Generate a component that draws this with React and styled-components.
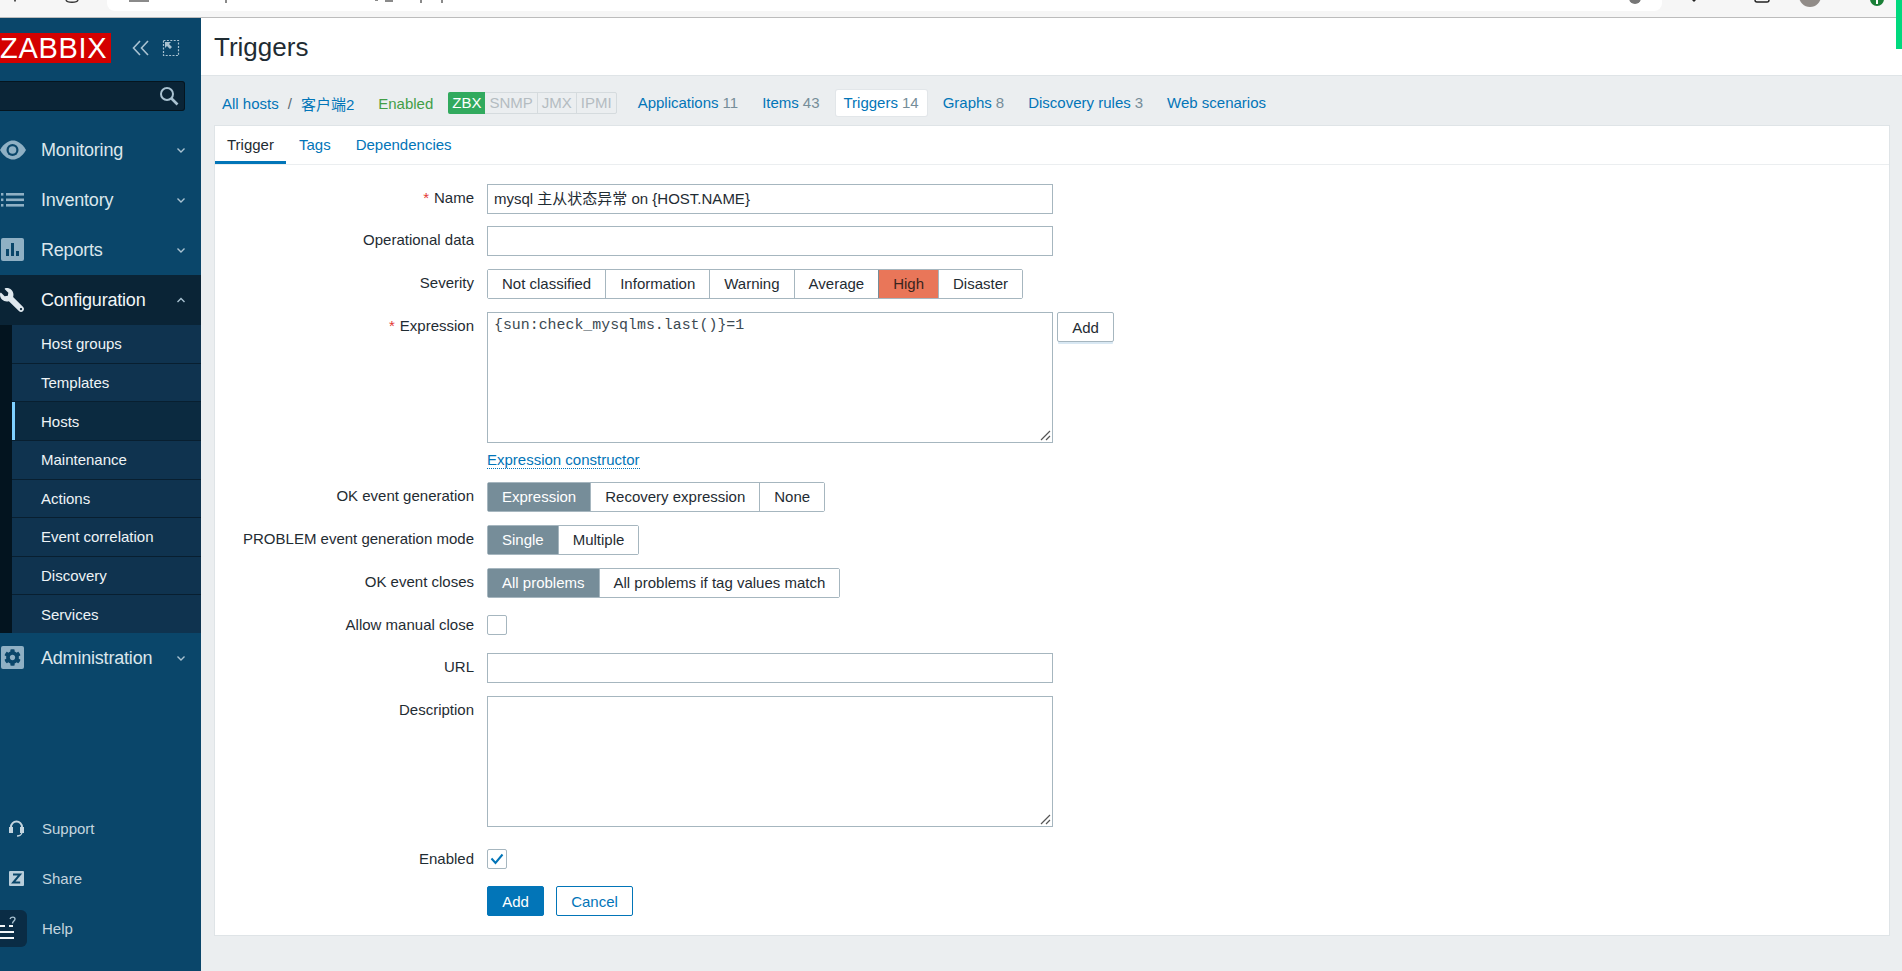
import React from 'react';
import styled, { createGlobalStyle } from 'styled-components';
import { FaCog, FaWrench } from 'react-icons/fa';

const GlobalStyle = createGlobalStyle`
  html, body {
    margin: 0;
    height: 100%;
    overflow: hidden;
    background: #ebeef0;
    font-family: "Liberation Sans", "Noto Sans CJK SC", sans-serif;
    font-size: 15px;
    color: #1f2c33;
  }
`;

const Page = styled.div`
  height: 971px;
  display: flex;
  flex-direction: column;
  position: relative;
  overflow: hidden;
`;

const ChromeBar = styled.div`
  height: 17px;
  flex: none;
  background: #f6f6f6;
  border-bottom: 1px solid #bcbcbc;
  display: flex;
  overflow: hidden;
`;

const ChromeIcons = styled.svg`
  flex: none;
  height: 17px;
  width: ${({ width }) => width}px;
`;

const UrlBar = styled.div`
  flex: 1;
  height: 11px;
  background: #fff;
  border-radius: 0 0 8px 8px;
  overflow: hidden;
`;

const UrlMarks = styled.svg`
  display: block;
  width: 100%;
  height: 11px;
`;

const ScrollMark = styled.div`
  position: absolute;
  top: 0;
  right: 0;
  width: 6px;
  height: 49px;
  background: #00d97e;
`;

const Body = styled.div`
  flex: 1;
  display: flex;
  min-height: 0;
`;

const Sidebar = styled.aside`
  width: 201px;
  flex: none;
  background: #0a466a;
  display: flex;
  flex-direction: column;
  padding-top: 15px;
`;

const LogoRow = styled.div`
  display: flex;
  align-items: center;
  height: 30px;
`;

const Logo = styled.div`
  width: 111px;
  height: 30px;
  background: #d40000;
  color: #fff;
  font-size: 29px;
  line-height: 30px;
  letter-spacing: 0.7px;
  white-space: nowrap;
  overflow: hidden;
  margin-right: 21px;
`;

const LogoIcon = styled.svg`
  width: 18px;
  height: 18px;
  margin-right: 12px;
  fill: none;
  stroke: #a9c2d1;
  stroke-width: 1.6;
`;

const Search = styled.div`
  width: 185px;
  height: 30px;
  margin: 18px 0 14px;
  background: #0a2436;
  border: 1px solid #05151f;
  border-left: 0;
  border-radius: 0 3px 3px 0;
  box-sizing: border-box;
  display: flex;
  justify-content: flex-end;
  align-items: center;
  padding-right: 5px;
`;

const MenuRow = styled.div`
  height: 50px;
  display: flex;
  align-items: center;
  color: ${({ $open }) => ($open ? '#f2f6f8' : '#dbe6ec')};
  background: ${({ $open }) => ($open ? '#0a2436' : 'transparent')};
  font-size: 18px;
`;

const MenuIcon = styled.span`
  width: 41px;
  flex: none;
  display: flex;
  align-items: center;
`;

const IconTile = styled.span`
  width: 23px;
  height: 23px;
  margin: -2px 0 0 1px;
  border-radius: 2px;
  background: #8fb0c4;
  color: #0a466a;
  display: flex;
  align-items: center;
  justify-content: center;
`;

const FlippedWrench = styled(FaWrench)`
  transform: scaleX(-1);
  color: #dfe8ee;
`;

const MenuText = styled.span`
  flex: 1;
  padding-top: 1px;
  letter-spacing: -0.2px;
`;

const Chevron = styled.svg`
  width: 10px;
  height: 10px;
  margin-right: 15px;
  fill: none;
  stroke: #a9c2d1;
  stroke-width: 1.4;
`;

const SubMenu = styled.div`
  display: flex;
  flex-direction: column;
  border-left: 12px solid #03141f;
  height: 308px;
`;

const SubItem = styled.div`
  flex: 1;
  display: flex;
  align-items: center;
  padding-left: 29px;
  box-sizing: border-box;
  font-size: 15px;
  color: #eef3f6;
  background: ${({ $active }) => ($active ? '#0b2a40' : '#0f334f')};
  border-bottom: 1px solid #081f30;
  box-shadow: ${({ $active }) => ($active ? 'inset 3px 0 0 #7fd0ff' : 'none')};
  &:last-child { border-bottom: 0; }
`;

const Spacer = styled.div`
  flex: 1;
`;

const FootList = styled.div`
  display: flex;
  flex-direction: column;
  padding-bottom: 18px;
`;

const FootRow = styled.div`
  height: 50px;
  display: flex;
  align-items: center;
  color: #c4d5df;
  font-size: 15px;
`;

const FootIcon = styled.span`
  width: 42px;
  flex: none;
  display: flex;
  justify-content: center;
  padding-right: 9px;
  box-sizing: border-box;
`;

const HelpButton = styled.span`
  width: 27px;
  height: 37px;
  margin-right: 15px;
  background: #0a2c45;
  border-radius: 0 6px 6px 0;
  flex: none;
  display: flex;
  align-items: center;
`;

const Main = styled.main`
  flex: 1;
  min-width: 0;
  display: flex;
  flex-direction: column;
`;

const Header = styled.header`
  height: 58px;
  flex: none;
  box-sizing: border-box;
  background: #fff;
  border-bottom: 1px solid #dfe4e7;
  display: flex;
  align-items: center;
  padding-left: 13px;
`;

const Title = styled.h1`
  margin: 2px 0 0;
  font-size: 26px;
  font-weight: 400;
  color: #1f2c33;
`;

const Content = styled.div`
  flex: 1;
  padding: 0 12px 35px 13px;
  display: flex;
  flex-direction: column;
  min-height: 0;
`;

const HostNav = styled.nav`
  height: 49px;
  flex: none;
  box-sizing: border-box;
  display: flex;
  align-items: center;
  padding: 5px 0 0 8px;
  white-space: nowrap;
`;

const Link = styled.a`
  color: #0275b8;
  text-decoration: none;
`;

const Crumb = styled.span`
  color: #5b6a73;
  margin: 0 9px;
`;

const EnabledText = styled.span`
  color: #429e47;
  margin: 0 15px 0 24px;
`;

const Badges = styled.div`
  display: flex;
  height: 20px;
  border: 1px solid #d5dbde;
  border-radius: 2px;
  margin-right: 13px;
  background: #ebeef0;
`;

const Badge = styled.span`
  padding: 0 4px;
  color: ${({ $on }) => ($on ? '#fff' : '#b4bcc1')};
  background: ${({ $on }) => ($on ? '#31aa5e' : 'transparent')};
  border-right: ${({ $on }) => ($on ? '0' : '1px solid #d5dbde')};
  border-radius: ${({ $on }) => ($on ? '2px 0 0 2px' : '0')};
  margin: ${({ $on }) => ($on ? '-1px 0 -1px -1px' : '0')};
  line-height: ${({ $on }) => ($on ? '22px' : '20px')};
  &:last-child { border-right: 0; }
`;

const NavItem = styled.a`
  height: 26px;
  line-height: 26px;
  padding: 0 8px;
  margin-right: 8px;
  color: #0275b8;
  border-radius: 2px;
  background: ${({ $active }) => ($active ? '#fff' : 'transparent')};
  box-shadow: ${({ $active }) => ($active ? '0 0 0 1px #e2e6e9' : 'none')};
`;

const Count = styled.span`
  color: #768d99;
  margin-left: 4px;
`;

const Card = styled.section`
  flex: 1;
  background: #fff;
  border: 1px solid #dfe4e7;
  min-height: 0;
  box-sizing: border-box;
`;

const Tabs = styled.div`
  height: 38px;
  display: flex;
  gap: 1px;
  border-bottom: 1px solid #ebeef0;
`;

const Tab = styled.a`
  padding: 0 12px;
  line-height: 37px;
  height: 38px;
  box-sizing: border-box;
  color: ${({ $active }) => ($active ? '#1f2c33' : '#0275b8')};
  border-bottom: 3px solid ${({ $active }) => ($active ? '#0275b8' : 'transparent')};
`;

const Form = styled.div`
  padding-top: 19px;
  display: flex;
  flex-direction: column;
`;

const Row = styled.div`
  display: grid;
  grid-template-columns: 259px auto;
  column-gap: 13px;
  justify-content: start;
  margin-bottom: ${({ $gap }) => $gap ?? 13}px;
`;

const Label = styled.label`
  text-align: right;
  line-height: 28px;
  white-space: nowrap;
`;

const Star = styled.span`
  color: #e33734;
  margin-right: 5px;
`;

const Input = styled.div`
  width: 566px;
  height: 30px;
  box-sizing: border-box;
  border: 1px solid #a6b6bf;
  line-height: 28px;
  padding-left: 6px;
  white-space: nowrap;
`;

const TextBox = styled(Input)`
  height: 131px;
  position: relative;
  font-family: ${({ $mono }) => ($mono ? '"Liberation Mono", monospace' : 'inherit')};
  font-size: ${({ $mono }) => ($mono ? '14.9px' : '15px')};
  color: ${({ $mono }) => ($mono ? '#3c4a52' : 'inherit')};
  line-height: 25px;
`;

const Grip = styled.svg`
  position: absolute;
  right: 1px;
  bottom: 1px;
  width: 12px;
  height: 12px;
  stroke: #555;
  stroke-width: 1.2;
`;

const ExprWrap = styled.div`
  display: flex;
  gap: 4px;
  align-items: flex-start;
`;

const Segments = styled.div`
  display: inline-flex;
  height: 30px;
  box-sizing: border-box;
  border: 1px solid #a6b6bf;
  border-radius: 2px;
  justify-self: start;
`;

const Segment = styled.span`
  padding: 0 14px;
  line-height: 28px;
  white-space: nowrap;
  color: ${({ $on, $high }) => ($high ? '#3a241d' : $on ? '#fff' : '#1f2c33')};
  background: ${({ $on, $high }) => ($high ? '#e97659' : $on ? '#768d99' : '#fff')};
  border-right: 1px solid #a6b6bf;
  box-shadow: ${({ $high }) => ($high ? '-1px 0 0 #768d99' : 'none')};
  &:last-child { border-right: 0; }
`;

const SmallButton = styled.button`
  width: 57px;
  height: 30px;
  background: #fff;
  border: 1px solid #a6b6bf;
  border-radius: 2px;
  font: inherit;
  color: #1f2c33;
  padding: 0;
  box-shadow: 0 3px 0 -1px #d9e8f3;
`;

const ConstructorLink = styled.a`
  color: #0275b8;
  border-bottom: 1px dotted #0275b8;
  line-height: 17px;
  justify-self: start;
`;

const Checkbox = styled.span`
  width: 20px;
  height: 20px;
  box-sizing: border-box;
  border: 1px solid #a6b6bf;
  border-radius: 2px;
  display: flex;
  align-items: center;
  justify-content: center;
  align-self: center;
`;

const Actions = styled.div`
  display: flex;
  gap: 12px;
`;

const PrimaryButton = styled.button`
  width: 57px;
  height: 30px;
  border: 1px solid #0275b8;
  background: #0275b8;
  color: #fff;
  border-radius: 2px;
  font: inherit;
  padding: 0;
`;

const GhostButton = styled(PrimaryButton)`
  width: 77px;
  background: #fff;
  color: #0275b8;
`;

const ChevronIcon = ({ up }) => (
  <Chevron viewBox="0 0 10 10">
    <path d={up ? 'M1.5 7 L5 3.5 L8.5 7' : 'M1.5 3.5 L5 7 L8.5 3.5'} />
  </Chevron>
);

const ResizeGrip = () => (
  <Grip viewBox="0 0 12 12">
    <path d="M11 2 L2 11 M11 7 L7 11" />
  </Grip>
);

const menuIcons = {
  eye: (
    <svg width="26" height="20" viewBox="0 0 26 20">
      <path fill="#8fb0c4" d="M0 10 C4 3 9 .5 13 .5 S22 3 26 10 C22 17 17 19.500 13 19.500 S4 17 0 10Z" />
      <circle cx="12.500" cy="10" r="6" fill="#0a466a" />
      <circle cx="12.500" cy="10" r="3.800" fill="#8fb0c4" />
    </svg>
  ),
  list: (
    <svg width="25" height="16" viewBox="0 0 25 16" fill="#8fb0c4">
      <rect x="1" y="1" width="2.400" height="2.600" />
      <rect x="1" y="6.500" width="2.400" height="2.600" />
      <rect x="1" y="12" width="2.400" height="2.600" />
      <rect x="6" y="1" width="18" height="2.600" />
      <rect x="6" y="6.500" width="18" height="2.600" />
      <rect x="6" y="12" width="18" height="2.600" />
    </svg>
  ),
  chart: (
    <IconTile>
      <svg width="15" height="14" viewBox="0 0 15 14" fill="#0a466a">
        <path d="M1 7h3v7H1zM6 1h3v13H6zM11 9h3v5h-3z" />
      </svg>
    </IconTile>
  ),
  wrench: <FlippedWrench size={24} />,
  gear: (
    <IconTile>
      <FaCog size={17} />
    </IconTile>
  ),
};

export default function App() {
  return (
    <Page>
      <GlobalStyle />
      <ChromeBar>
        <ChromeIcons width="107" viewBox="0 0 107 17">
          <path d="M66 0 C67 3 77 3 78 0" fill="none" stroke="#333" strokeWidth="1.400" />
          <rect x="14" y="0" width="2" height="1.500" fill="#555" />
        </ChromeIcons>
        <UrlBar>
          <UrlMarks viewBox="0 0 1555 11" preserveAspectRatio="xMinYMin slice">
            <g fill="#8a8a8a">
              <rect x="22" y="0" width="20" height="2" />
              <rect x="118" y="0" width="2" height="3" />
              <rect x="268" y="0" width="3" height="1" />
              <rect x="278" y="0" width="8" height="2" />
              <rect x="313" y="0" width="2" height="3" />
              <rect x="334" y="0" width="2" height="3" />
            </g>
            <circle cx="1528" cy="-2" r="6" fill="#777" />
          </UrlMarks>
        </UrlBar>
        <ChromeIcons width="240" viewBox="0 0 240 17">
          <rect x="93" y="-6" width="14" height="8" rx="2" fill="none" stroke="#222" strokeWidth="1.400" />
          <path d="M30 0 L32 2 L34 0 Z" fill="#222" />
          <circle cx="148" cy="-4" r="11" fill="#918c88" />
          <circle cx="215" cy="-1" r="7" fill="#1a7f37" />
          <rect x="214" y="0" width="2" height="4" fill="#fff" />
        </ChromeIcons>
      </ChromeBar>
      <ScrollMark />
      <Body>
        <Sidebar>
          <LogoRow>
            <Logo>ZABBIX</Logo>
            <LogoIcon viewBox="0 0 18 18">
              <path d="M8 2 L1.500 9 L8 16 M16 2 L9.500 9 L16 16" />
            </LogoIcon>
            <LogoIcon viewBox="0 0 18 18">
              <path strokeDasharray="2 1.400" strokeWidth="1.200" d="M1.500 1.500h15v15h-15z" />
              <path fill="#a9c2d1" stroke="none" d="M3 3h6L7 5l3 3-2 2-3-3-2 2z" />
            </LogoIcon>
          </LogoRow>
          <Search>
            <svg width="20" height="20" viewBox="0 0 20 20" fill="none" stroke="#a9c2d1" strokeWidth="2">
              <circle cx="8" cy="8" r="6" />
              <path d="M12.500 12.500 L18.500 18.500" strokeWidth="2.600" />
            </svg>
          </Search>
          <MenuRow>
            <MenuIcon>{menuIcons.eye}</MenuIcon>
            <MenuText>Monitoring</MenuText>
            <ChevronIcon />
          </MenuRow>
          <MenuRow>
            <MenuIcon>{menuIcons.list}</MenuIcon>
            <MenuText>Inventory</MenuText>
            <ChevronIcon />
          </MenuRow>
          <MenuRow>
            <MenuIcon>{menuIcons.chart}</MenuIcon>
            <MenuText>Reports</MenuText>
            <ChevronIcon />
          </MenuRow>
          <MenuRow $open>
            <MenuIcon>{menuIcons.wrench}</MenuIcon>
            <MenuText>Configuration</MenuText>
            <ChevronIcon up />
          </MenuRow>
          <SubMenu>
            <SubItem>Host groups</SubItem>
            <SubItem>Templates</SubItem>
            <SubItem $active>Hosts</SubItem>
            <SubItem>Maintenance</SubItem>
            <SubItem>Actions</SubItem>
            <SubItem>Event correlation</SubItem>
            <SubItem>Discovery</SubItem>
            <SubItem>Services</SubItem>
          </SubMenu>
          <MenuRow>
            <MenuIcon>{menuIcons.gear}</MenuIcon>
            <MenuText>Administration</MenuText>
            <ChevronIcon />
          </MenuRow>
          <Spacer />
          <FootList>
            <FootRow>
              <FootIcon>
                <svg width="15" height="17" viewBox="0 0 15 17" fill="none" stroke="#c4d5df" strokeWidth="2">
                  <path d="M2 11 V7 a5.500 5.500 0 0 1 11 0 V11" />
                  <path d="M13 12 C13 15 10 16 8 16" strokeWidth="1.400" />
                  <rect x="1" y="8" width="2" height="4" fill="#c4d5df" />
                  <rect x="12" y="8" width="2" height="4" fill="#c4d5df" />
                </svg>
              </FootIcon>
              Support
            </FootRow>
            <FootRow>
              <FootIcon>
                <svg width="15" height="15" viewBox="0 0 15 15">
                  <rect width="15" height="15" rx="1" fill="#b9cedb" />
                  <path fill="none" stroke="#0a466a" strokeWidth="2" d="M4 3.500h7L4.200 11.500h7" />
                </svg>
              </FootIcon>
              Share
            </FootRow>
            <FootRow>
              <HelpButton>
                <svg width="16" height="24" viewBox="0 0 16 24" fill="none" stroke="#f2f6f8" strokeWidth="2">
                  <path d="M0 10h5M0 16h14M0 22h14M9 10h4" />
                  <path d="M10 3 C11 .5 15 .5 15 3 C15 5 12.500 5 12.500 7.500" stroke="#a9c2d1" strokeWidth="1.400" />
                </svg>
              </HelpButton>
              Help
            </FootRow>
          </FootList>
        </Sidebar>
        <Main>
          <Header>
            <Title>Triggers</Title>
          </Header>
          <Content>
            <HostNav>
              <Link>All hosts</Link>
              <Crumb>/</Crumb>
              <Link>客户端2</Link>
              <EnabledText>Enabled</EnabledText>
              <Badges>
                <Badge $on>ZBX</Badge>
                <Badge>SNMP</Badge>
                <Badge>JMX</Badge>
                <Badge>IPMI</Badge>
              </Badges>
              <NavItem>Applications<Count>11</Count></NavItem>
              <NavItem>Items<Count>43</Count></NavItem>
              <NavItem $active>Triggers<Count>14</Count></NavItem>
              <NavItem>Graphs<Count>8</Count></NavItem>
              <NavItem>Discovery rules<Count>3</Count></NavItem>
              <NavItem>Web scenarios</NavItem>
            </HostNav>
            <Card>
              <Tabs>
                <Tab $active>Trigger</Tab>
                <Tab>Tags</Tab>
                <Tab>Dependencies</Tab>
              </Tabs>
              <Form>
                <Row $gap={12}>
                  <Label><Star>*</Star>Name</Label>
                  <Input>mysql 主从状态异常 on {'{HOST.NAME}'}</Input>
                </Row>
                <Row>
                  <Label>Operational data</Label>
                  <Input />
                </Row>
                <Row>
                  <Label>Severity</Label>
                  <Segments>
                    <Segment>Not classified</Segment>
                    <Segment>Information</Segment>
                    <Segment>Warning</Segment>
                    <Segment>Average</Segment>
                    <Segment $high>High</Segment>
                    <Segment>Disaster</Segment>
                  </Segments>
                </Row>
                <Row $gap={8}>
                  <Label><Star>*</Star>Expression</Label>
                  <ExprWrap>
                    <TextBox $mono>
                      {'{sun:check_mysqlms.last()}=1'}
                      <ResizeGrip />
                    </TextBox>
                    <SmallButton>Add</SmallButton>
                  </ExprWrap>
                </Row>
                <Row $gap={13}>
                  <span />
                  <ConstructorLink>Expression constructor</ConstructorLink>
                </Row>
                <Row>
                  <Label>OK event generation</Label>
                  <Segments>
                    <Segment $on>Expression</Segment>
                    <Segment>Recovery expression</Segment>
                    <Segment>None</Segment>
                  </Segments>
                </Row>
                <Row>
                  <Label>PROBLEM event generation mode</Label>
                  <Segments>
                    <Segment $on>Single</Segment>
                    <Segment>Multiple</Segment>
                  </Segments>
                </Row>
                <Row>
                  <Label>OK event closes</Label>
                  <Segments>
                    <Segment $on>All problems</Segment>
                    <Segment>All problems if tag values match</Segment>
                  </Segments>
                </Row>
                <Row $gap={14}>
                  <Label>Allow manual close</Label>
                  <Checkbox />
                </Row>
                <Row>
                  <Label>URL</Label>
                  <Input />
                </Row>
                <Row $gap={18}>
                  <Label>Description</Label>
                  <TextBox>
                    <ResizeGrip />
                  </TextBox>
                </Row>
                <Row $gap={13}>
                  <Label>Enabled</Label>
                  <Checkbox>
                    <svg width="14" height="12" viewBox="0 0 14 12" fill="none" stroke="#0275b8" strokeWidth="2">
                      <path d="M1.500 5.500 L5.500 10 L12.500 1.500" />
                    </svg>
                  </Checkbox>
                </Row>
                <Row>
                  <span />
                  <Actions>
                    <PrimaryButton>Add</PrimaryButton>
                    <GhostButton>Cancel</GhostButton>
                  </Actions>
                </Row>
              </Form>
            </Card>
          </Content>
        </Main>
      </Body>
    </Page>
  );
}
